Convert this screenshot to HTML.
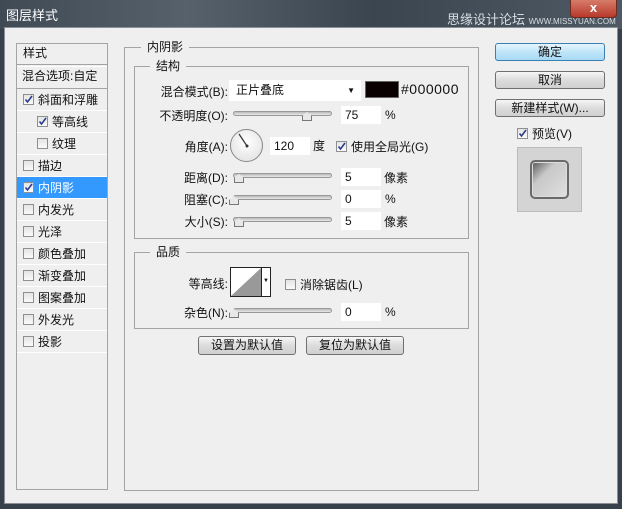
<!DOCTYPE html>
<html><head><meta charset="utf-8"><style>
*{margin:0;padding:0;box-sizing:border-box}
body{width:622px;height:509px;overflow:hidden;background:#36414b;font-family:"Liberation Sans","Noto Sans CJK SC",sans-serif;font-size:12px;color:#111;position:relative}
.a{position:absolute}
.title{left:0;top:0;width:622px;height:29px;background:linear-gradient(90deg,#3f4a55,#56616b 30%,#3a4550 60%,#4e5964);}
.body{left:4px;top:27px;width:614px;height:477px;background:#efefef;border:1px solid #8a9096}
.box{border:1px solid #a4a4a4}
.lg{background:#efefef;padding:0 6px;font-size:12px}
.row{position:absolute;left:1px;width:90px;height:22px;line-height:22px;border-bottom:1px solid #fff;padding-left:6px}
.cb{display:inline-block;width:11px;height:11px;border:1px solid #8e8f8f;background:linear-gradient(#e4e4e4,#fafafa);vertical-align:-1px;margin-right:4px;position:relative}
.cb svg{position:absolute;left:0;top:0}
.sl{height:5px;border:1px solid #999;border-radius:3px;background:linear-gradient(#bbb,#e8e8e8)}
.th{width:10px;height:9px;border:1px solid #777;border-top:none;background:#e8e8e8;clip-path:polygon(50% 0,100% 45%,100% 100%,0 100%,0 45%)}
.in{background:#fff;height:18px;line-height:18px;padding-left:4px;font-size:12px}
.btn{border:1px solid #707070;border-radius:3px;background:linear-gradient(#f6f6f6,#dcdcdc 50%,#d0d0d0);text-align:center;line-height:16px;font-size:12px}
.lb{text-align:right;font-size:12px}
</style></head><body>
<div class="a title"></div>
<div class="a" style="left:6px;top:5px;color:#fff;font-size:13px">图层样式</div>
<div class="a" style="left:447px;top:9px;color:#d8dde2;font-size:13px">思缘设计论坛 <span style="font-size:8px">WWW.MISSYUAN.COM</span></div>
<div class="a" style="left:570px;top:-2px;width:47px;height:20px;background:linear-gradient(#d9806e,#b8392a);border:1px solid #6b2a22;border-radius:0 0 4px 4px;color:#fff;text-align:center;font-weight:bold;font-size:13px;line-height:18px">x</div>
<div class="a body"></div>

<div class="a box" style="left:16px;top:43px;width:92px;height:447px"></div>
<div class="a" style="left:23px;top:44px">样式</div>
<div class="a" style="left:17px;top:64px;width:90px;border-top:1px solid #a4a4a4;border-bottom:1px solid #fff;height:3px"></div>
<div class="a" style="left:22px;top:67px">混合选项:自定</div>
<div class="a" style="left:17px;top:88px;width:90px;border-top:1px solid #a4a4a4"></div>
<div class="row" style="left:17px;top:89px"><span class="cb"><svg width="9" height="9"><path d="M1.5 4.5 L3.5 7 L8 1" stroke="#2b3b8a" stroke-width="1.6" fill="none"/></svg></span>斜面和浮雕</div>
<div class="row" style="left:17px;top:111px;padding-left:20px"><span class="cb"><svg width="9" height="9"><path d="M1.5 4.5 L3.5 7 L8 1" stroke="#2b3b8a" stroke-width="1.6" fill="none"/></svg></span>等高线</div>
<div class="row" style="left:17px;top:133px;padding-left:20px"><span class="cb"></span>纹理</div>
<div class="row" style="left:17px;top:155px"><span class="cb"></span>描边</div>
<div class="row" style="left:17px;top:177px;background:#3399ff;color:#fff"><span class="cb"><svg width="9" height="9"><path d="M1.5 4.5 L3.5 7 L8 1" stroke="#2b3b8a" stroke-width="1.6" fill="none"/></svg></span>内阴影</div>
<div class="row" style="left:17px;top:199px"><span class="cb"></span>内发光</div>
<div class="row" style="left:17px;top:221px"><span class="cb"></span>光泽</div>
<div class="row" style="left:17px;top:243px"><span class="cb"></span>颜色叠加</div>
<div class="row" style="left:17px;top:265px"><span class="cb"></span>渐变叠加</div>
<div class="row" style="left:17px;top:287px"><span class="cb"></span>图案叠加</div>
<div class="row" style="left:17px;top:309px"><span class="cb"></span>外发光</div>
<div class="row" style="left:17px;top:331px"><span class="cb"></span>投影</div>

<div class="a box" style="left:124px;top:47px;width:355px;height:444px"></div>
<div class="a lg" style="left:141px;top:38px">内阴影</div>
<div class="a box" style="left:134px;top:66px;width:335px;height:173px"></div>
<div class="a lg" style="left:150px;top:57px">结构</div>

<div class="a lb" style="left:140px;top:83px;width:88px">混合模式(B):</div>
<div class="a in" style="left:229px;top:80px;width:132px;height:21px;line-height:21px;padding-left:7px">正片叠底<span style="position:absolute;right:6px;top:0;font-size:8px">▼</span></div>
<div class="a" style="left:365px;top:81px;width:34px;height:17px;background:#0a0002;border:1px solid #666"></div>
<div class="a" style="left:401px;top:81px;font-size:14px;letter-spacing:0.5px">#000000</div>

<div class="a lb" style="left:140px;top:107px;width:88px">不透明度(O):</div>
<div class="a sl" style="left:233px;top:111px;width:99px"></div><div class="a th" style="left:302px;top:112px"></div>
<div class="a in" style="left:341px;top:106px;width:40px">75</div><div class="a" style="left:385px;top:108px">%</div>

<div class="a lb" style="left:140px;top:138px;width:88px">角度(A):</div>
<div class="a" style="left:230px;top:129px;width:33px;height:33px;border-radius:50%;border:1px solid #888;background:radial-gradient(circle at 50% 40%,#fff,#ddd)"></div>
<svg class="a" style="left:230px;top:129px" width="34" height="34"><line x1="17" y1="17" x2="9" y2="5" stroke="#333" stroke-width="1.2"/><circle cx="17" cy="17" r="1.5" fill="#333"/></svg>
<div class="a in" style="left:270px;top:137px;width:40px">120</div><div class="a" style="left:313px;top:137px">度</div>
<div class="a" style="left:336px;top:138px"><span class="cb"><svg width="9" height="9"><path d="M1.5 4.5 L3.5 7 L8 1" stroke="#2b3b8a" stroke-width="1.6" fill="none"/></svg></span>使用全局光(G)</div>

<div class="a lb" style="left:140px;top:169px;width:88px">距离(D):</div>
<div class="a sl" style="left:233px;top:173px;width:99px"></div><div class="a th" style="left:234px;top:174px"></div>
<div class="a in" style="left:341px;top:168px;width:40px">5</div><div class="a" style="left:384px;top:169px">像素</div>
<div class="a lb" style="left:140px;top:191px;width:88px">阻塞(C):</div>
<div class="a sl" style="left:233px;top:195px;width:99px"></div><div class="a th" style="left:229px;top:196px"></div>
<div class="a in" style="left:341px;top:190px;width:40px">0</div><div class="a" style="left:385px;top:192px">%</div>
<div class="a lb" style="left:140px;top:213px;width:88px">大小(S):</div>
<div class="a sl" style="left:233px;top:217px;width:99px"></div><div class="a th" style="left:234px;top:218px"></div>
<div class="a in" style="left:341px;top:212px;width:40px">5</div><div class="a" style="left:384px;top:213px">像素</div>

<div class="a box" style="left:134px;top:252px;width:335px;height:77px"></div>
<div class="a lg" style="left:150px;top:243px">品质</div>
<div class="a lb" style="left:140px;top:275px;width:88px">等高线:</div>
<div class="a" style="left:230px;top:267px;width:41px;height:30px;border:1px solid #222;background:#fff">
<svg width="30" height="28" style="position:absolute;left:0;top:0"><polygon points="0,28 30,0 30,28" fill="#999"/></svg>
<div style="position:absolute;left:30px;top:0;width:9px;height:28px;border-left:1px solid #222;font-size:6px;line-height:26px;text-align:center">▼</div></div>
<div class="a" style="left:285px;top:276px"><span class="cb"></span>消除锯齿(L)</div>
<div class="a lb" style="left:140px;top:304px;width:88px">杂色(N):</div>
<div class="a sl" style="left:233px;top:308px;width:99px"></div><div class="a th" style="left:229px;top:309px"></div>
<div class="a in" style="left:341px;top:303px;width:40px">0</div><div class="a" style="left:385px;top:305px">%</div>

<div class="a btn" style="left:198px;top:336px;width:98px;height:19px">设置为默认值</div>
<div class="a btn" style="left:306px;top:336px;width:98px;height:19px">复位为默认值</div>

<div class="a btn" style="left:495px;top:43px;width:110px;height:18px;border-color:#3c7fb1;background:linear-gradient(#e6f5fd,#bfe5f8 50%,#a7d9f5)">确定</div>
<div class="a btn" style="left:495px;top:71px;width:110px;height:18px">取消</div>
<div class="a btn" style="left:495px;top:99px;width:110px;height:18px">新建样式(W)...</div>
<div class="a" style="left:517px;top:125px"><span class="cb"><svg width="9" height="9"><path d="M1.5 4.5 L3.5 7 L8 1" stroke="#2b3b8a" stroke-width="1.6" fill="none"/></svg></span>预览(V)</div>
<div class="a" style="left:517px;top:147px;width:65px;height:65px;background:#d4d4d4;border:1px solid #bbb"></div>
<div class="a" style="left:530px;top:160px;width:39px;height:39px;border:2px solid #6a6a6a;border-radius:5px;background:linear-gradient(135deg,#555,#c8c8c8 35%,#e0e0e0);box-shadow:inset 0 0 0 1px #ddd"></div>
</body></html>
